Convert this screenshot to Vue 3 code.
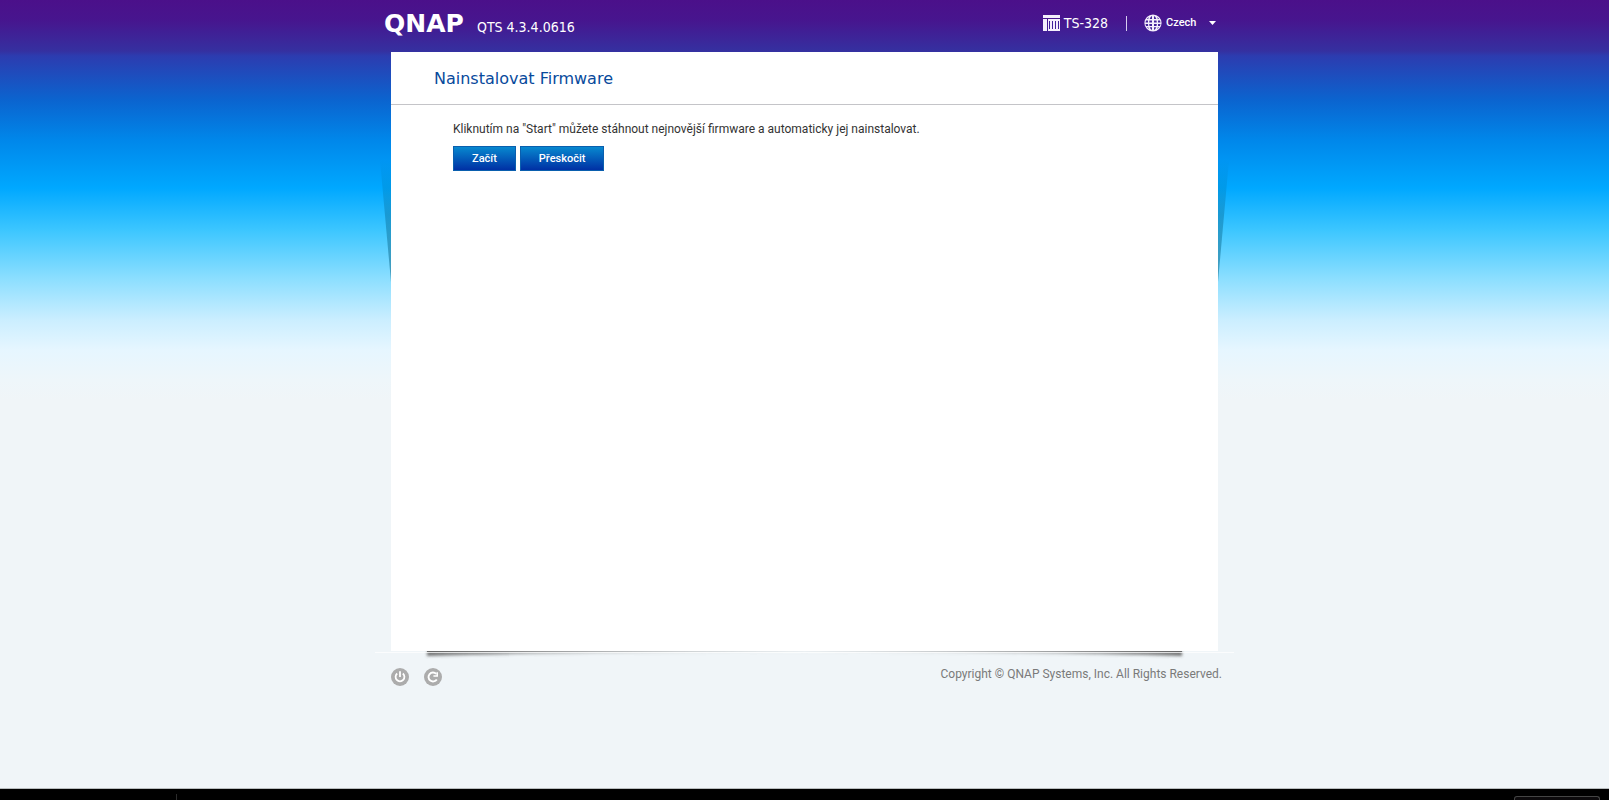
<script setup>
import { ref } from 'vue'

const language = ref('Czech')
</script>

<template>
  <div class="page">
    <div class="shell">
      <header class="top">
        <div class="brand">
          <svg class="logo" viewBox="0 0 82 20" role="img" aria-label="QNAP">
            <text x="-1" y="17">QNAP</text>
          </svg>
          <span class="version">QTS 4.3.4.0616</span>
        </div>
        <div class="tools">
          <svg class="nas" viewBox="0 0 17 16" aria-hidden="true">
            <path d="M0 0h17v3H0z M0 4h4v12H0z M5 4h12v12H5z" fill="#f4effc" />
            <path d="M6 6h1v8H6z M9 6h1v8H9z M12 6h1v8h-1z M15 6h1v8h-1z" fill="#40219a" />
          </svg>
          <span class="model">TS-328</span>
          <span class="divider"></span>
          <svg class="globe" viewBox="0 0 18 18" aria-hidden="true">
            <circle cx="9" cy="9" r="8.6" fill="#f4effc" />
            <g fill="#44229a">
              <path d="M8 2v3H5.700Q6.500 2.500 8 2z M10 2v3h2.300Q11.500 2.500 10 2z M4.900 3Q4.300 4 4.200 5H3Q3.500 4 4.900 3z M13.100 3Q13.700 4 13.800 5H15Q14.500 4 13.100 3z" />
              <path d="M2 6.500h2v2H1.500z M5.500 6.500H8v2H5.200z M10 6.500h2.500l.3 2H10z M14 6.500h2l.5 2H14z" />
              <path d="M1.500 10H4l.2 2H2z M5.200 10H8v2H5.500z M10 10h2.800l-.3 2H10z M14 10h2.500l-.5 2h-2z" />
              <path d="M8 16v-2.700H5.700Q6.500 15.500 8 16z M10 16v-2.700h2.300Q11.500 15.500 10 16z M4.900 15Q4.300 14 4.200 13.300H3Q3.500 14 4.900 15z M13.100 15Q13.700 14 13.800 13.300H15Q14.500 14 13.100 15z" />
            </g>
          </svg>
          <label class="language">
            <select v-model="language" aria-label="Jazyk">
              <option>Czech</option>
            </select>
            <svg class="caret" viewBox="0 0 7 4" aria-hidden="true"><path d="M0 0h7L3.500 4z" fill="#fff" /></svg>
          </label>
        </div>
      </header>

      <main class="card">
        <h1>Nainstalovat Firmware</h1>
        <section class="content">
          <p>Kliknutím na "Start" můžete stáhnout nejnovější firmware a automaticky jej nainstalovat.</p>
          <div class="actions">
            <button type="button">Začít</button>
            <button type="button">Přeskočit</button>
          </div>
        </section>
      </main>

      <div class="shade">
        <svg viewBox="0 0 758 8" preserveAspectRatio="none" aria-hidden="true">
          <defs>
            <linearGradient id="edge" x1="0" x2="1" y1="0" y2="0">
              <stop offset="0" stop-color="#555" stop-opacity=".8" />
              <stop offset=".15" stop-color="#666" stop-opacity=".5" />
              <stop offset=".35" stop-color="#888" stop-opacity=".25" />
              <stop offset=".5" stop-color="#999" stop-opacity=".05" />
              <stop offset=".65" stop-color="#888" stop-opacity=".25" />
              <stop offset=".85" stop-color="#666" stop-opacity=".5" />
              <stop offset="1" stop-color="#555" stop-opacity=".8" />
            </linearGradient>
            <filter id="soft" x="-2%" y="-50%" width="104%" height="250%"><feGaussianBlur stdDeviation="1.500" /></filter>
          </defs>
          <path d="M2 0H756V5Q600 1 379 1Q158 1 2 5z" fill="url(#edge)" filter="url(#soft)" />
          <path d="M2 0H756V1H2z" fill="url(#edge)" />
          <path d="M-50 1H808V2H-50z" fill="#fff" opacity=".7" />
        </svg>
      </div>

      <footer class="foot">
        <div class="power">
          <button type="button" aria-label="Vypnout">
            <svg viewBox="0 0 18 18" aria-hidden="true">
              <circle cx="9" cy="9" r="9" fill="#acacac" />
              <path d="M6.200 5.500A4.400 4.400 0 1 0 11.800 5.500M9 3.200V9" fill="none" stroke="#fff" stroke-width="1.800" />
            </svg>
          </button>
          <button type="button" aria-label="Restartovat">
            <svg viewBox="0 0 18 18" aria-hidden="true">
              <circle cx="9" cy="9" r="9" fill="#acacac" />
              <path d="M12.200 5.800A4.500 4.500 0 1 0 12.800 11.400" fill="none" stroke="#fff" stroke-width="1.900" />
              <path d="M14 4.200v4.600H9.400V7.300h3V4.200z" fill="#fff" />
            </svg>
          </button>
        </div>
        <span class="copyright">Copyright © QNAP Systems, Inc. All Rights Reserved.</span>
      </footer>
    </div>

    <div class="taskbar">
      <span class="mark"></span>
      <span class="tray"></span>
    </div>
  </div>
</template>

<style>
body {
  margin: 0;
  background: #f0f5f8;
}
</style>

<style scoped>
.page {
  display: flex;
  flex-direction: column;
  min-height: 100vh;
  font-family: "DejaVu Sans Condensed", "DejaVu Sans", Verdana, sans-serif;
  background: linear-gradient(
    #4b108a 0, #47158e 20px, #3530a0 51px, #2c3cb0 56px, #0b64cf 100px,
    #0087ea 140px, #00a8ff 188px, #3cc6ff 230px, #8edfff 280px,
    #cbeeff 320px, #e6f6ff 350px, #eef6fa 380px, #f0f5f8 400px
  );
}

.shell {
  flex: 1;
  width: 827px;
  max-width: 100%;
  margin: 0 auto;
}

.top {
  display: flex;
  justify-content: space-between;
  height: 52px;
  color: #fff;
}

.brand {
  display: flex;
  align-items: flex-start;
  gap: 10px;
  margin-left: -6px;
  padding-top: 15px;
}

.logo {
  width: 82px;
  height: 20px;
  overflow: visible;
}

.logo text {
  font: bold 25px "DejaVu Sans", sans-serif;
  fill: #fff;
}

.version {
  padding-top: 3px;
  font-size: 14px;
  line-height: 18px;
}

.tools {
  display: flex;
  align-items: center;
  height: 46px;
}

.nas {
  width: 17px;
  height: 16px;
}

.model {
  margin-left: 4px;
  font-size: 14px;
  line-height: 18px;
}

.divider {
  width: 1px;
  height: 15px;
  margin: 0 17px 0 18px;
  background: #d6cdf0;
}

.globe {
  width: 18px;
  height: 18px;
}

.language {
  display: flex;
  align-items: center;
  margin: 0 2px 0 4px;
}

.language select {
  width: 43px;
  padding: 0 0 2px;
  border: 0;
  appearance: none;
  color: #fff;
  background: transparent;
  font: 500 11px Roboto, "DejaVu Sans", sans-serif;
}

.language option {
  color: #222;
}

.caret {
  width: 7px;
  height: 4px;
}

.card {
  position: relative;
  min-height: 599px;
  background: #fff;
}

.card::before,
.card::after {
  content: "";
  position: absolute;
  top: 108px;
  width: 11px;
  height: 122px;
  background: linear-gradient(rgba(0, 90, 140, 0), rgba(0, 90, 130, 0.35) 45%, rgba(0, 90, 120, 0.5));
}

.card::before {
  right: 100%;
  clip-path: polygon(0 0, 100% 0, 100% 100%);
}

.card::after {
  left: 100%;
  clip-path: polygon(0 0, 100% 0, 0 100%);
}

h1 {
  margin: 0;
  padding: 2px 43px 0;
  border-bottom: 1px solid #c4c4c8;
  color: #084a9c;
  font: 16px/50px "DejaVu Sans", Verdana, sans-serif;
}

.content {
  padding: 16px 62px;
}

.content p {
  margin: 0;
  color: #333;
  font: 12px/16px Roboto, "DejaVu Sans", sans-serif;
}

.actions {
  display: flex;
  gap: 4px;
  margin-top: 9px;
}

.actions button {
  height: 25px;
  padding: 0 18px;
  border: 1px solid #0a5fae;
  color: #fff;
  background: linear-gradient(#0788cf, #0030a4);
  font: 500 11px Roboto, "DejaVu Sans", sans-serif;
}

.shade {
  height: 8px;
  padding: 0 34px;
}

.shade svg {
  display: block;
  width: 100%;
  height: 8px;
  overflow: visible;
}

.foot {
  display: flex;
  justify-content: space-between;
  margin-right: -4px;
  padding-top: 9px;
}

.power {
  display: flex;
  gap: 15px;
}

.power button {
  width: 18px;
  height: 18px;
  padding: 0;
  border: 0;
  border-radius: 50%;
  background: none;
}

.power svg {
  display: block;
  width: 18px;
  height: 18px;
}

.copyright {
  color: #7a7a7a;
  font: 12px/12px Roboto, "DejaVu Sans", sans-serif;
}

.taskbar {
  display: flex;
  justify-content: space-between;
  align-items: flex-end;
  height: 11px;
  border-top: 1px solid #b8bcbe;
  background: #000;
}

.mark {
  width: 1px;
  height: 6px;
  margin-left: 176px;
  background: #2c2c2c;
}

.tray {
  box-sizing: border-box;
  width: 86px;
  height: 4px;
  margin-right: 9px;
  border: 1px solid #454545;
  border-bottom: 0;
  border-radius: 3px 3px 0 0;
  background: #0c0a0c;
}
</style>
